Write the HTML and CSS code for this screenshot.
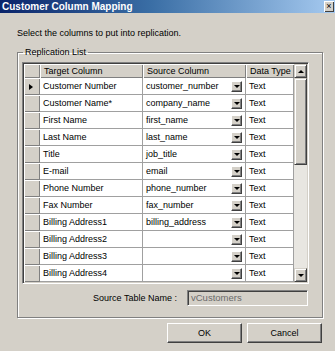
FILE: index.html
```html
<!DOCTYPE html>
<html>
<head>
<meta charset="utf-8">
<link rel="stylesheet" href="styles.css">
</head>
<body>
<div class="window">
  <div class="titlebar">
    <span class="title">Customer Column Mapping</span>
    <span class="close">×</span>
  </div>
  <p class="intro">Select the columns to put into replication.</p>
  <fieldset class="group">
    <legend>Replication List</legend>
    <div class="grid">
      <div class="table">
        <div class="rh hd"></div>
        <div class="ch">Target Column</div>
        <div class="ch">Source Column</div>
        <div class="ch">Data Type</div>

        <div class="rh"><span class="cur"></span></div>
        <div class="c">Customer Number</div>
        <div class="c src"><span>customer_number</span><i class="dd"></i></div>
        <div class="c">Text</div>

        <div class="rh"></div>
        <div class="c">Customer Name*</div>
        <div class="c src"><span>company_name</span><i class="dd"></i></div>
        <div class="c">Text</div>

        <div class="rh"></div>
        <div class="c">First Name</div>
        <div class="c src"><span>first_name</span><i class="dd"></i></div>
        <div class="c">Text</div>

        <div class="rh"></div>
        <div class="c">Last Name</div>
        <div class="c src"><span>last_name</span><i class="dd"></i></div>
        <div class="c">Text</div>

        <div class="rh"></div>
        <div class="c">Title</div>
        <div class="c src"><span>job_title</span><i class="dd"></i></div>
        <div class="c">Text</div>

        <div class="rh"></div>
        <div class="c">E-mail</div>
        <div class="c src"><span>email</span><i class="dd"></i></div>
        <div class="c">Text</div>

        <div class="rh"></div>
        <div class="c">Phone Number</div>
        <div class="c src"><span>phone_number</span><i class="dd"></i></div>
        <div class="c">Text</div>

        <div class="rh"></div>
        <div class="c">Fax Number</div>
        <div class="c src"><span>fax_number</span><i class="dd"></i></div>
        <div class="c">Text</div>

        <div class="rh"></div>
        <div class="c">Billing Address1</div>
        <div class="c src"><span>billing_address</span><i class="dd"></i></div>
        <div class="c">Text</div>

        <div class="rh"></div>
        <div class="c">Billing Address2</div>
        <div class="c src"><span></span><i class="dd"></i></div>
        <div class="c">Text</div>

        <div class="rh"></div>
        <div class="c">Billing Address3</div>
        <div class="c src"><span></span><i class="dd"></i></div>
        <div class="c">Text</div>

        <div class="rh"></div>
        <div class="c">Billing Address4</div>
        <div class="c src"><span></span><i class="dd"></i></div>
        <div class="c">Text</div>
      </div>
      <div class="vscroll">
        <div class="sbtn up"></div>
        <div class="thumb"></div>
        <div class="track"></div>
        <div class="sbtn down"></div>
      </div>
    </div>
    <div class="srcrow">
      <span class="lbl">Source Table Name :</span>
      <span class="tbox">vCustomers</span>
    </div>
  </fieldset>
  <div class="buttons">
    <span class="btn">OK</span>
    <span class="btn">Cancel</span>
  </div>
</div>
</body>
</html>
```
FILE: styles.css
```css
* { box-sizing: border-box; }
html, body { margin: 0; padding: 0; }
body {
  background: #d4d0c8;
  font-family: "Liberation Sans", Arial, sans-serif;
  font-size: 9px;
  color: #000;
}
.window {
  width: 336px;
  height: 351px;
  background: #d4d0c8;
  border-right: 1px solid #fff;
  overflow: hidden;
}
.titlebar {
  height: 13px;
  background: linear-gradient(to right, #0a246a 0%, #3a6ea5 45%, #a6caf0 100%);
  display: flex;
  align-items: center;
  justify-content: space-between;
  padding: 0 1px 0 2px;
}
.title {
  color: #fff;
  font-weight: bold;
  font-size: 10px;
  line-height: 13px;
}
.close {
  width: 10px;
  height: 11px;
  background: #d4d0c8;
  box-shadow: inset 1px 1px 0 #fff, inset -1px -1px 0 #404040;
  font-size: 9px;
  line-height: 10px;
  text-align: center;
  color: #000;
}
.intro {
  margin: 15px 0 0 17px;
  line-height: 11px;
}
.group {
  margin: 8px 0 0 17px;
  width: 306px;
  padding: 4px 12px 11px 4px;
  border: 1px solid #808080;
  box-shadow: inset 1px 1px 0 #fff, 1px 1px 0 #fff;
  min-width: 0;
}
.group legend {
  padding: 0 2px;
  margin-left: 1px;
  line-height: 11px;
}
.grid {
  width: 287px;
  height: 222px;
  display: flex;
  border: 1px solid;
  border-color: #808080 #fff #fff #808080;
  box-shadow: inset 1px 1px 0 #404040, inset -1px -1px 0 #d4d0c8;
  padding: 1px;
  background: #d4d0c8;
}
.table {
  display: grid;
  grid-template-columns: 16px 103px 103px 48px;
  grid-template-rows: 14px repeat(12, 17px);
  background: #fff;
}
.rh, .ch {
  background: #d4d0c8;
  box-shadow: inset 1px 1px 0 #fff, inset -1px -1px 0 #808080;
}
.ch {
  padding: 0 4px;
  line-height: 14px;
  white-space: nowrap;
  overflow: hidden;
}
.rh {
  display: flex;
  align-items: center;
  justify-content: center;
}
.cur {
  width: 0;
  height: 0;
  border-top: 3px solid transparent;
  border-bottom: 3px solid transparent;
  border-left: 4px solid #000;
  margin-left: -2px;
}
.c {
  background: #fff;
  border-right: 1px solid #a0a0a0;
  border-bottom: 1px solid #a0a0a0;
  padding: 0 2px 0 3px;
  line-height: 16px;
  white-space: nowrap;
  overflow: hidden;
}
.src {
  display: flex;
  align-items: center;
  justify-content: space-between;
  padding-right: 3px;
}
.dd {
  width: 11px;
  height: 11px;
  background: #d4d0c8;
  border: 1px solid;
  border-color: #fff #404040 #404040 #fff;
  box-shadow: inset -1px -1px 0 #808080;
  display: flex;
  align-items: center;
  justify-content: center;
  flex: none;
}
.dd::after, .sbtn::after {
  content: "";
  width: 0;
  height: 0;
  border-left: 3px solid transparent;
  border-right: 3px solid transparent;
  border-top: 3px solid #000;
}
.vscroll {
  width: 13px;
  display: flex;
  flex-direction: column;
}
.sbtn {
  height: 14px;
  background: #d4d0c8;
  border: 1px solid;
  border-color: #d4d0c8 #404040 #404040 #d4d0c8;
  box-shadow: inset 1px 1px 0 #fff, inset -1px -1px 0 #808080;
  display: flex;
  align-items: center;
  justify-content: center;
}
.sbtn.up::after {
  border-top: 0;
  border-bottom: 3px solid #000;
}
.thumb {
  height: 87px;
  background: #d4d0c8;
  border: 1px solid;
  border-color: #d4d0c8 #404040 #404040 #d4d0c8;
  box-shadow: inset 1px 1px 0 #fff, inset -1px -1px 0 #808080;
}
.track {
  flex: 1;
  background: #e8e6e1;
}
.srcrow {
  display: flex;
  justify-content: flex-end;
  align-items: center;
  margin-top: 6px;
  padding-right: 2px;
}
.lbl {
  margin-right: 10px;
}
.tbox {
  width: 121px;
  height: 16px;
  line-height: 14px;
  padding-left: 3px;
  color: #6a6a6a;
  background: #d4d0c8;
  border: 1px solid;
  border-color: #808080 #fff #fff #808080;
  box-shadow: inset 1px 1px 0 #404040;
  font-size: 9.5px;
}
.buttons {
  display: flex;
  justify-content: flex-end;
  gap: 5px;
  margin-top: 5px;
  padding-right: 13px;
}
.btn {
  width: 75px;
  height: 20px;
  line-height: 18px;
  text-align: center;
  background: #d4d0c8;
  border: 1px solid;
  border-color: #fff #404040 #404040 #fff;
  box-shadow: inset -1px -1px 0 #808080;
}
```
